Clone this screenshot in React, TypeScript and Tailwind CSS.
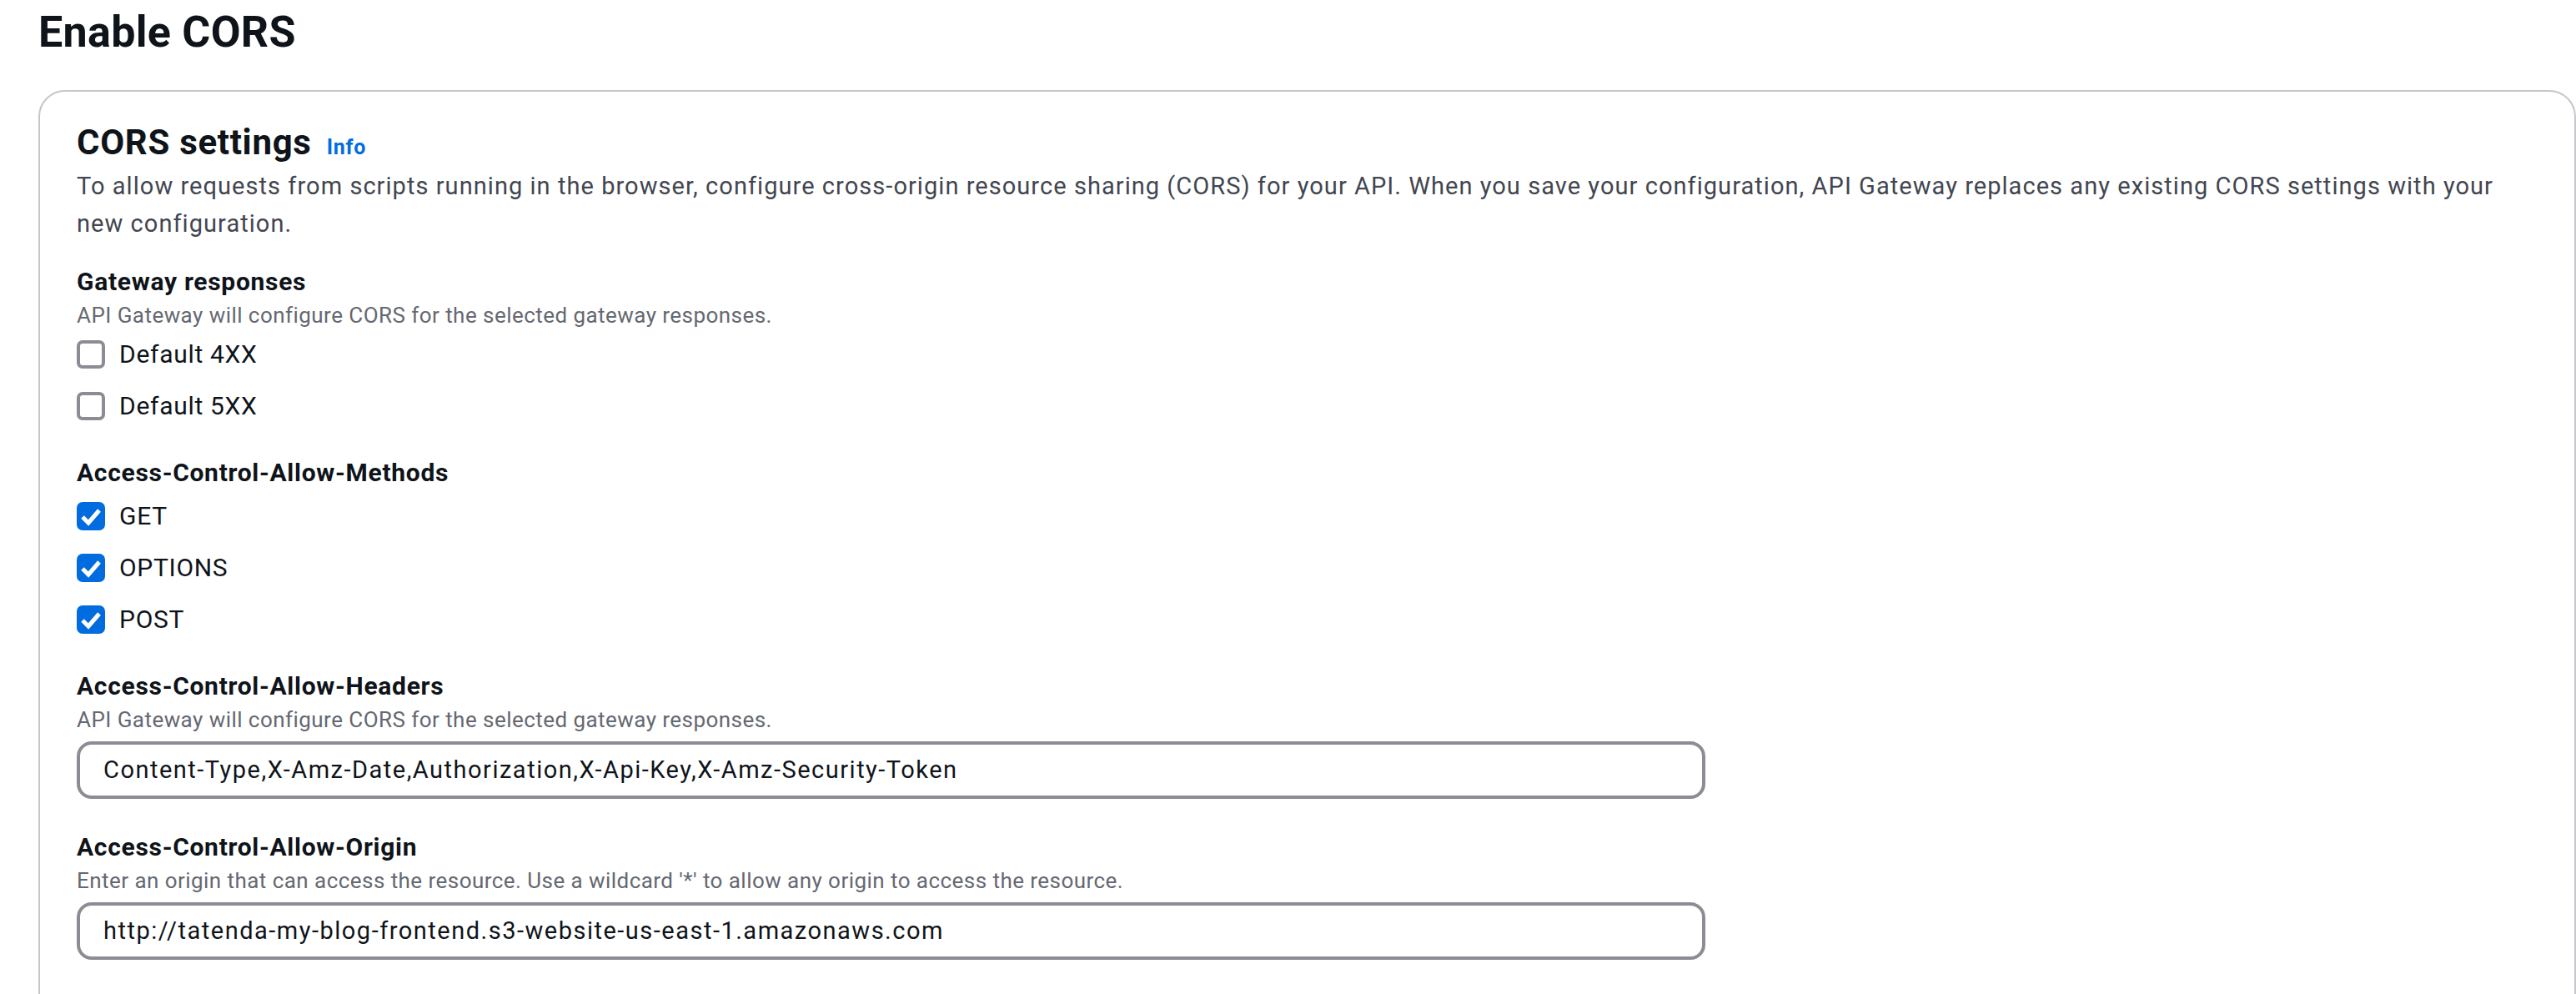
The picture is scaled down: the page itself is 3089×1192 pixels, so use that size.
import React from "react";

const FONT = { fontFamily: "Roboto, 'Noto Sans', Arial, sans-serif" };

function Box({ checked }: { checked: boolean }) {
  if (checked) {
    return (
      <div className="w-[34px] h-[34px] rounded-[7px] bg-[#006ce0] flex items-center justify-center shrink-0">
        <svg width="34" height="34" viewBox="0 0 34 34">
          <polyline points="7,18 14,25 27,10" fill="none" stroke="#ffffff" strokeWidth="5" strokeLinecap="butt" strokeLinejoin="miter" />
        </svg>
      </div>
    );
  }
  return <div className="w-[34px] h-[34px] rounded-[7px] border-[4px] border-[#8c8c94] bg-white shrink-0" />;
}

function Check({ label, checked }: { label: string; checked: boolean }) {
  return (
    <div className="flex items-center gap-[17px] h-[34px]">
      <Box checked={checked} />
      <span className="text-[30px] leading-[34px] tracking-[0.7px] text-[#0f141a]">{label}</span>
    </div>
  );
}

function Label({ children }: { children: React.ReactNode }) {
  return <div className="text-[30px] leading-[40px] font-bold tracking-[0.7px] text-[#0f141a]">{children}</div>;
}

function Desc({ children }: { children: React.ReactNode }) {
  return <div className="mt-[3px] text-[26px] leading-[34px] tracking-[0.45px] text-[#656871]">{children}</div>;
}

function Input({ value }: { value: string }) {
  return (
    <div className="mt-[9px] w-[1953px] h-[69px] rounded-[18px] border-[4px] border-[#8c8c94] bg-white flex items-center pl-[28px]">
      <span className="text-[29px] tracking-[1.5px] text-[#0f141a] whitespace-nowrap">{value}</span>
    </div>
  );
}

export default function App() {
  return (
    <div className="bg-white w-[3089px] h-[1192px] overflow-hidden pl-[46px]" style={FONT}>
      <h1 className="pt-[7px] text-[52px] leading-[64px] font-bold tracking-[0.3px] text-[#0f141a]">Enable CORS</h1>
      <div className="mt-[37px] border-[2px] border-[#c6c6cd] rounded-[32px] pl-[44px] pt-[35px] pb-[60px] h-[1200px]">
        <div className="flex items-baseline">
          <h2 className="text-[42px] leading-[52px] font-bold tracking-[0.7px] text-[#0f141a]">CORS settings</h2>
          <span className="ml-[18px] text-[25px] font-bold tracking-[0.8px] text-[#006ce0]">Info</span>
        </div>
        <p className="mt-[4px] text-[29px] leading-[45px] tracking-[1.05px] text-[#424650] whitespace-nowrap">
          To allow requests from scripts running in the browser, configure cross-origin resource sharing (CORS) for your API. When you save your configuration, API Gateway replaces any existing CORS settings with your
          <br />
          new configuration.
        </p>

        <div className="mt-[27px]">
          <Label>Gateway responses</Label>
          <Desc>API Gateway will configure CORS for the selected gateway responses.</Desc>
          <div className="mt-[13px] flex flex-col gap-[28px]">
            <Check label="Default 4XX" checked={false} />
            <Check label="Default 5XX" checked={false} />
          </div>
        </div>

        <div className="mt-[43px]">
          <Label>Access-Control-Allow-Methods</Label>
          <div className="mt-[15px] flex flex-col gap-[28px]">
            <Check label="GET" checked />
            <Check label="OPTIONS" checked />
            <Check label="POST" checked />
          </div>
        </div>

        <div className="mt-[43px]">
          <Label>Access-Control-Allow-Headers</Label>
          <Desc>API Gateway will configure CORS for the selected gateway responses.</Desc>
          <Input value="Content-Type,X-Amz-Date,Authorization,X-Api-Key,X-Amz-Security-Token" />
        </div>

        <div className="mt-[38px]">
          <Label>Access-Control-Allow-Origin</Label>
          <Desc>Enter an origin that can access the resource. Use a wildcard '*' to allow any origin to access the resource.</Desc>
          <Input value="http://tatenda-my-blog-frontend.s3-website-us-east-1.amazonaws.com" />
        </div>
      </div>
    </div>
  );
}
